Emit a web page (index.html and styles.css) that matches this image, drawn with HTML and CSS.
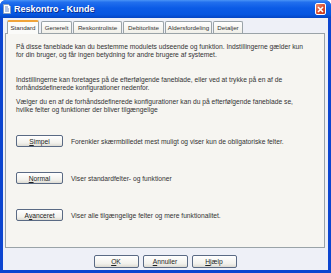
FILE: index.html
```html
<!doctype html>
<html>
<head>
<meta charset="utf-8">
<title>Reskontro - Kunde</title>
<link rel="stylesheet" href="styles.css">
</head>
<body>
<div class="window">
	<div class="titlebar">
		<span class="appicon"><svg width="8" height="10" viewBox="0 0 8 10"><path d="M0.5 0.5h5l2 2v7h-7z" fill="#fff" stroke="#8aa0c0"/><path d="M2 3h3M2 5h4M2 7h4" stroke="#6a8ac8"/></svg></span>
		<span class="title">Reskontro - Kunde</span>
		<span class="close"><svg width="7" height="7" viewBox="0 0 7 7"><path d="M1 1l5 5M6 1l-5 5" stroke="#fff" stroke-width="1.6"/></svg></span>
	</div>
	<div class="client">
		<div class="tabs">
			<span class="tab active tab-standard">Standard</span>
			<span class="tab tab-generelt">Generelt</span>
			<span class="tab tab-reskontro">Reskontroliste</span>
			<span class="tab tab-debitor">Debitorliste</span>
			<span class="tab tab-alder">Aldersfordeling</span>
			<span class="tab tab-detaljer">Detaljer</span>
		</div>
		<div class="page">
			<p class="p1">På disse faneblade kan du bestemme modulets udseende og funktion. Indstillingerne gælder kun<br>for din bruger, og får ingen betydning for andre brugere af systemet.</p>
			<p class="p2">Indstillingerne kan foretages på de efterfølgende faneblade, eller ved at trykke på en af de<br>forhåndsdefinerede konfigurationer nedenfor.</p>
			<p class="p3">Vælger du en af de forhåndsdefinerede konfigurationer kan du på efterfølgende faneblade se,<br>hvilke felter og funktioner der bliver tilgængelige</p>
			<div class="option first">
				<span class="btn small"><u>S</u>impel</span>
				<span class="desc">Forenkler skærmbilledet mest muligt og viser kun de obligatoriske felter.</span>
			</div>
			<div class="option">
				<span class="btn small"><u>N</u>ormal</span>
				<span class="desc">Viser standardfelter- og funktioner</span>
			</div>
			<div class="option">
				<span class="btn small">A<u>v</u>anceret</span>
				<span class="desc">Viser alle tilgængelige felter og mere funktionalitet.</span>
			</div>
		</div>
		<div class="actions">
			<span class="btn"><u>O</u>K</span>
			<span class="btn"><u>A</u>nnuller</span>
			<span class="btn"><u>H</u>jælp</span>
		</div>
	</div>
</div>
</body>
</html>
```

FILE: styles.css
```css
body
{
	margin:0px;
	padding:0px;
	background:#fff;
	font-family:"Liberation Sans", Arial, sans-serif;
	font-size:6.7px;
	color:#000;
}
.window
{
	width:331px;
	height:273px;
	box-sizing:border-box;
	display:flex;
	flex-direction:column;
	background:#0c45d0;
	padding:0 3px 3px 3px;
	border-radius:6px 6px 0 0;
}
.titlebar
{
	height:18px;
	margin:0 -3px;
	padding:0 5px 0 3px;
	display:flex;
	align-items:center;
	background:linear-gradient(#4a94f6 0%, #2270ee 12%, #0b5be6 45%, #0656e0 80%, #0445c4 100%);
	border-radius:6px 6px 0 0;
}
.appicon
{
	width:8px;
	height:10px;
	display:flex;
	margin-right:3px;
}
.title
{
	flex:1;
	font-size:9px;
	font-weight:bold;
	color:#fff;
	text-shadow:1px 1px 0 #0a2a8a;
}
.close
{
	width:11px;
	height:12px;
	box-sizing:border-box;
	border:1px solid #fff;
	border-radius:2px;
	background:linear-gradient(135deg, #ee8c6e, #d9482a 60%, #c43a1e);
	display:flex;
	align-items:center;
	justify-content:center;
}
.client
{
	flex:1;
	display:flex;
	flex-direction:column;
	background:#eef0f7;
	padding:1px 3px 0 2px;
}
.tabs
{
	display:flex;
	align-items:flex-end;
	height:14px;
	padding-left:2px;
	gap:1px;
	white-space:nowrap;
	font-size:6.2px;
}
.tab
{
	flex:none;
	height:12px;
	box-sizing:border-box;
	text-align:center;
	overflow:hidden;
	line-height:11px;
	border:1px solid #9aa3a8;
	border-bottom:none;
	border-radius:2px 2px 0 0;
	background:linear-gradient(#fefefe, #f0efe8);
	color:#333;
}
.tab.active
{
	height:14px;
	line-height:12px;
	border-top:2px solid #f0a43a;
	background:#fbfbf9;
	position:relative;
	margin-bottom:-1px;
	margin-right:1px;
}
.tab-standard { width:32px; }
.tab-generelt { width:31px; }
.tab-reskontro { width:49px; }
.tab-debitor { width:41px; }
.tab-alder { width:47px; }
.tab-detaljer { width:30px; }
.page
{
	height:215px;
	box-sizing:border-box;
	border:1px solid #9aa3a8;
	background:#f6f5f1;
	padding:9px 10px 0 10px;
	color:#333;
}
.page p
{
	margin:0;
	line-height:7.5px;
	white-space:nowrap;
}
.p2
{
	margin-top:18px !important;
}
.p3
{
	margin-top:7px !important;
}
.option
{
	display:flex;
	align-items:center;
	margin-top:25px;
	white-space:nowrap;
}
.option.first
{
	margin-top:22px;
}
.btn
{
	width:45px;
	height:13px;
	box-sizing:border-box;
	display:flex;
	align-items:center;
	justify-content:center;
	border:1px solid #5a6a84;
	border-radius:2px;
	background:linear-gradient(#ffffff, #f2f1ec 70%, #dcdad2);
	color:#222;
}
.btn.small
{
	width:47px;
	height:12px;
}
.desc
{
	margin-left:8px;
}
.actions
{
	flex:1;
	display:flex;
	justify-content:center;
	align-items:center;
	gap:4px;
	padding-top:4px;
}
```
